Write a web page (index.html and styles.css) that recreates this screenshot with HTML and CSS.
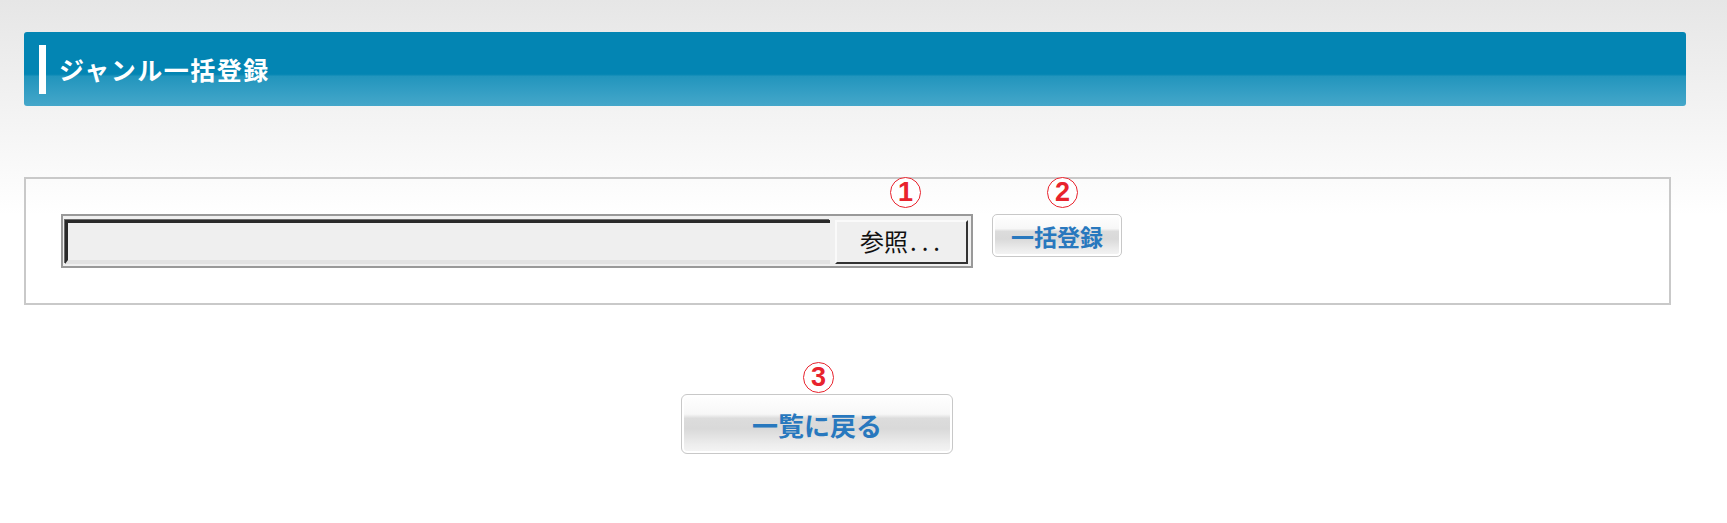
FILE: index.html
```html
<!DOCTYPE html>
<html lang="ja">
<head>
  <meta charset="UTF-8" />
  <title>ジャンル一括登録</title>
  <link rel="stylesheet" href="styles.css">
</head>
<body>
<section class="header">
  <span class="header-bar"></span>
  <h1>ジャンル一括登録</h1>
</section>
<section class="upload-box">
  <div class="upload-row">
    <div class="file-box">
      <div class="file-field"></div>
      <div class="file-btn">参照<span class="dots">...</span></div>
      <span class="mark mark-browse">1</span>
    </div>
    <button class="btn btn-submit" type="submit">一括登録
      <span class="mark mark-submit">2</span>
    </button>
  </div>
</section>
<div class="back-row">
  <button class="btn btn-back" type="button">一覧に戻る
    <span class="mark mark-back">3</span>
  </button>
</div>
</body>
</html>
```

FILE: styles.css
```css
body {
  margin: 0;
  min-height: 523px;
  background: linear-gradient(#e6e6e6 0, #ffffff 215px);
  font-family: "Noto Sans CJK JP", "Noto Sans", sans-serif;
}
.header {
  margin: 32px 41px 0 24px;
  height: 74px;
  border-radius: 3px;
  background: linear-gradient(#0385b3 0, #0385b3 57%, #2295bd 60%, #45a7ca 100%);
  display: flex;
  align-items: center;
  gap: 13px;
  padding-left: 15px;
}
.header-bar {
  width: 7px;
  height: 49px;
  background-color: #fff;
}
h1 {
  margin: 0;
  color: #fff;
  font-size: 25px;
  font-weight: 700;
  letter-spacing: 1.5px;
}
.upload-box {
  margin: 71px 0 0 24px;
  width: 1647px;
  box-sizing: border-box;
  border: 2px solid #c9c9c9;
  padding: 35px;
}
.upload-row {
  display: flex;
  align-items: flex-start;
  gap: 19px;
}
.file-box {
  position: relative;
  width: 912px;
  height: 54px;
  box-sizing: border-box;
  border: 2px solid #999;
  background-color: #f0f0f0;
  padding: 4px 3px 2px 2px;
  display: flex;
  gap: 5px;
}
.file-field {
  flex: 1;
  background-color: #efefef;
  border-top: 3px solid #2a2a2a;
  border-left: 3px solid #2a2a2a;
  border-bottom: 4px solid #e2e2e2;
  box-shadow: -1px -1px 0 #6a6a6a;
}
.file-btn {
  width: 133px;
  box-sizing: border-box;
  background-color: #efefef;
  border-top: 2px solid #fafafa;
  border-left: 2px solid #fafafa;
  border-right: 2px solid #333;
  border-bottom: 2px solid #333;
  font-size: 24px;
  line-height: 38px;
  padding-left: 23px;
  color: #111;
  white-space: nowrap;
}
.file-btn .dots {
  letter-spacing: 5px;
  margin-left: 2px;
}
.btn {
  position: relative;
  box-sizing: border-box;
  border: 1px solid #c8c8c8;
  border-radius: 5px;
  background: linear-gradient(#ffffff 0, #f7f7f7 33%, #dcdcdc 40%, #d9d9d9 58%, #ededed 85%, #f5f5f5 100%);
  box-shadow: inset 0 0 0 2px #fff;
  color: #2878be;
  font-family: "Noto Sans CJK JP", "Noto Sans", sans-serif;
  font-weight: 700;
  padding: 0;
  cursor: pointer;
}
.btn-submit {
  width: 130px;
  height: 43px;
  font-size: 23px;
}
.back-row {
  margin: 89px 0 0 681px;
}
.btn-back {
  width: 272px;
  height: 60px;
  font-size: 26px;
  border-radius: 6px;
}
/* annotation circles */
.mark {
  position: absolute;
  width: 31px;
  height: 31px;
  box-sizing: border-box;
  border: 1px solid #e8232d;
  border-radius: 50%;
  background-color: #fff;
  color: #e8232d;
  font-family: "Liberation Sans", Arial, sans-serif;
  font-weight: 700;
  font-size: 27px;
  line-height: 29px;
  text-align: center;
}
.mark-browse {
  left: 827px;
  top: -39px;
}
.mark-submit {
  left: 54px;
  top: -38px;
}
.mark-back {
  left: 121px;
  top: -33px;
}
```
